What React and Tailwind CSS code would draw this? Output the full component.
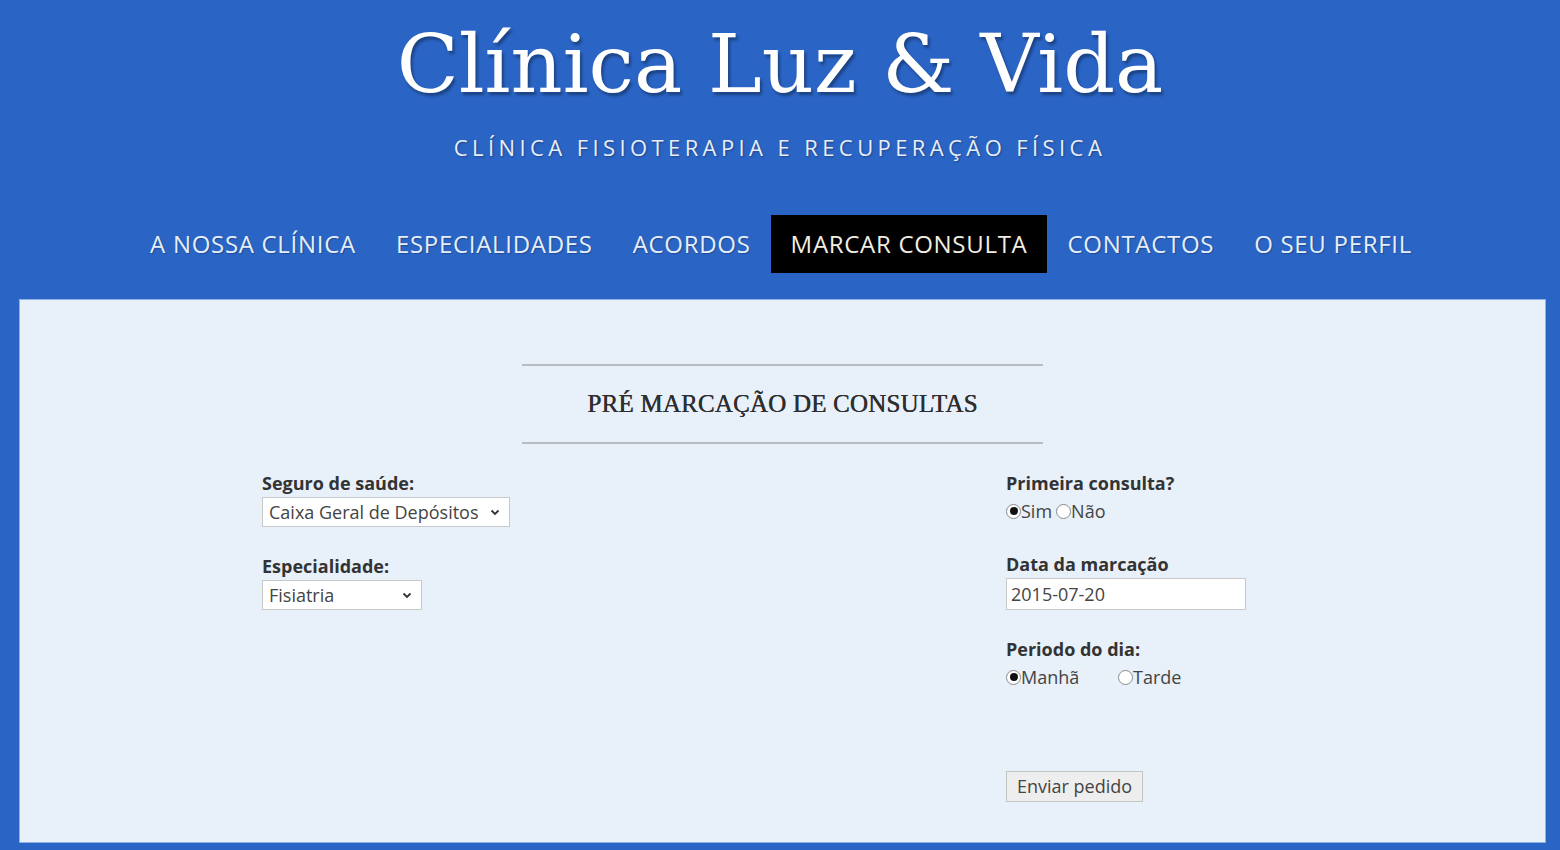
import React from "react";

const navItems = [
    "A NOSSA CLÍNICA",
    "ESPECIALIDADES",
    "ACORDOS",
    "MARCAR CONSULTA",
    "CONTACTOS",
    "O SEU PERFIL",
];

const Chevron = () => (
    <svg width="12" height="12" viewBox="0 0 12 12" className="shrink-0">
        <path d="M2.5 4.5 L6 8 L9.5 4.5" fill="none" stroke="#333" strokeWidth="1.8" />
    </svg>
);

const Radio = ({ checked }) => (
    <span className="inline-flex items-center justify-center w-[15px] h-[15px] rounded-full border border-[#8a8a8a] bg-white shrink-0">
        {checked && <span className="w-[8px] h-[8px] rounded-full bg-[#111]" />}
    </span>
);

const Select = ({ value, width }) => (
    <div
        className={`flex items-center justify-between h-[30px] border border-[#c9c9c9] bg-white pl-[6px] pr-[8px] text-[18px] text-[#444] ${width}`}
    >
        <span>{value}</span>
        <Chevron />
    </div>
);

const Label = ({ children }) => (
    <div className="text-[18px] font-bold text-[#333] leading-[27px]">{children}</div>
);

export default function App() {
    return (
        <div
            className="w-[1560px] h-[850px] bg-[#2a64c5] flex flex-col overflow-hidden"
            style={{ fontFamily: '"Open Sans", "Liberation Sans", sans-serif' }}
        >
            {/* cabeçalho */}
            <div className="flex flex-col items-center pt-[14px]">
                <h1
                    className="text-white text-[81px] leading-[100px] [text-shadow:2px_3px_3px_rgba(0,0,0,0.35)]"
                    style={{ fontFamily: '"DejaVu Serif", "Liberation Serif", serif' }}
                >
                    Clínica Luz &amp; Vida
                </h1>
                <div className="mt-[18px] text-[#e8eef8] text-[22px] tracking-[4.4px] leading-[30px] [text-shadow:1px_1px_2px_rgba(0,0,0,0.3)]">
                    CLÍNICA FISIOTERAPIA E RECUPERAÇÃO FÍSICA
                </div>
            </div>

            {/* navegação */}
            <div className="flex justify-center mt-[53px] pl-[2px]">
                {navItems.map((item) => (
                    <div
                        key={item}
                        className={`h-[58px] px-[20px] flex items-center text-[24px] tracking-[0.7px] ${
                            item === "MARCAR CONSULTA"
                                ? "bg-black text-[#f2ede0]"
                                : "text-[#e6eefa] [text-shadow:1px_1px_1px_rgba(0,0,0,0.25)]"
                        }`}
                    >
                        {item}
                    </div>
                ))}
            </div>

            {/* conteúdo */}
            <div className="ml-[19px] mr-[14px] mt-[26px] h-[544px] bg-[#e8f0fa] border border-[#8fb0e6] flex flex-col">
                <div className="flex flex-col items-center mt-[64px]">
                    <div className="w-[521px] h-[2px] bg-[#b9bcc2]" />
                    <div
                        className="h-[76px] flex items-center text-[25px] tracking-[0.2px] text-[#2e2e2e] [text-shadow:0.4px_0_0_#2e2e2e]"
                        style={{ fontFamily: '"Liberation Serif", "DejaVu Serif", serif' }}
                    >
                        PRÉ MARCAÇÃO DE CONSULTAS
                    </div>
                    <div className="w-[521px] h-[2px] bg-[#b9bcc2]" />
                </div>

                <div className="flex pl-[242px] mt-[26px]">
                    <div className="w-[744px] flex flex-col">
                        <Label>Seguro de saúde:</Label>
                        <Select value="Caixa Geral de Depósitos" width="w-[248px]" />
                        <div className="mt-[26px]">
                            <Label>Especialidade:</Label>
                        </div>
                        <Select value="Fisiatria" width="w-[160px]" />
                    </div>

                    <div className="flex flex-col">
                        <Label>Primeira consulta?</Label>
                        <div className="flex items-center text-[18px] text-[#444] leading-[28px]">
                            <Radio checked />
                            <span className="mr-[4px]">Sim</span>
                            <Radio />
                            <span>Não</span>
                        </div>
                        <div className="mt-[26px]">
                            <Label>Data da marcação</Label>
                        </div>
                        <div className="w-[240px] h-[32px] border border-[#c9c9c9] bg-white pl-[4px] flex items-center text-[18px] text-[#444]">
                            2015-07-20
                        </div>
                        <div className="mt-[26px]">
                            <Label>Periodo do dia:</Label>
                        </div>
                        <div className="flex items-center text-[18px] text-[#444] leading-[28px]">
                            <Radio checked />
                            <span className="w-[97px]">Manhã</span>
                            <Radio />
                            <span>Tarde</span>
                        </div>
                        <div className="mt-[80px]">
                            <button className="h-[31px] px-[10px] bg-[#eeeeee] border border-[#c4c4c4] text-[18px] text-[#444] flex items-center">
                                Enviar pedido
                            </button>
                        </div>
                    </div>
                </div>
            </div>
        </div>
    );
}
